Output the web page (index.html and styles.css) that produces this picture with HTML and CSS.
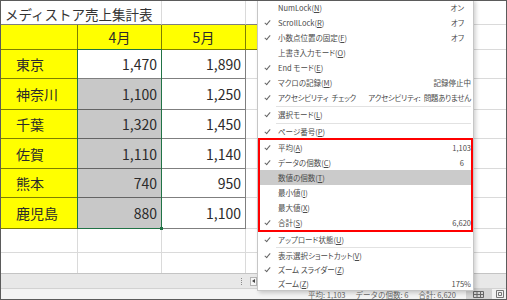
FILE: index.html
```html
<!DOCTYPE html>
<html lang="ja">
<head>
    <meta charset="UTF-8">
    <meta name="viewport" content="width=device-width, initial-scale=1.0">
    <title>メディストア売上集計表</title>
    <link rel="stylesheet" href="styles.css">
</head>
<body>
<div class="window">
    <div class="sheet">
        <!-- row 1 -->
        <div class="c top title">メディストア売上集計表</div>
        <div class="c top"></div>
        <div class="c top"></div>
        <div class="c"></div>
        <div class="c"></div>
        <!-- row 2 -->
        <div class="c t y"></div>
        <div class="c t y center">4月</div>
        <div class="c t y center">5月</div>
        <div class="c t y"></div>
        <div class="c"></div>
        <div class="c"></div>
        <!-- rows 3-8 -->
        <div class="c t y name">東京</div>
        <div class="c t num active">1,470<div class="range"></div></div>
        <div class="c t num">1,890</div>
        <div class="c"></div>
        <div class="c"></div>
        <div class="c"></div>

        <div class="c t y name">神奈川</div>
        <div class="c t num sel">1,100</div>
        <div class="c t num">1,250</div>
        <div class="c"></div>
        <div class="c"></div>
        <div class="c"></div>

        <div class="c t y name">千葉</div>
        <div class="c t num sel">1,320</div>
        <div class="c t num">1,450</div>
        <div class="c"></div>
        <div class="c"></div>
        <div class="c"></div>

        <div class="c t y name">佐賀</div>
        <div class="c t num sel">1,110</div>
        <div class="c t num">1,140</div>
        <div class="c"></div>
        <div class="c"></div>
        <div class="c"></div>

        <div class="c t y name">熊本</div>
        <div class="c t num sel">740</div>
        <div class="c t num">950</div>
        <div class="c"></div>
        <div class="c"></div>
        <div class="c"></div>

        <div class="c t y name">鹿児島</div>
        <div class="c t num sel">880</div>
        <div class="c t num">1,100</div>
        <div class="c"></div>
        <div class="c"></div>
        <div class="c"></div>
        <!-- rows 9-10 -->
        <div class="c"></div><div class="c"></div><div class="c"></div><div class="c"></div><div class="c"></div><div class="c"></div>
        <div class="c"></div><div class="c"></div><div class="c"></div><div class="c"></div><div class="c"></div><div class="c"></div>
    </div>

    <div class="hbar">
        <div class="tabs"></div>
        <div class="split"></div>
        <div class="arrow"></div>
    </div>

    <div class="status">
        <span>平均: 1,103</span>
        <span>データの個数: 6</span>
        <span>合計: 6,620</span>
        <div class="views">
            <div class="view current">
                <svg width="11" height="7" viewBox="0 0 11 7"><path d="M0.5 0.5h10v6h-10z M0.5 3.5h10 M4 0.5v6 M7.5 0.5v6" fill="none" stroke="#666" stroke-width="1"/></svg>
            </div>
            <div class="view">
                <svg width="8" height="8" viewBox="0 0 8 8"><path d="M0.5 0.5h7v7h-7z M2.5 2.5h3v3h-3z" fill="none" stroke="#777" stroke-width="1"/></svg>
            </div>
            <div class="view">
                <svg width="9" height="8" viewBox="0 0 9 8"><path d="M0.5 0.5h8v7h-8z M0.5 4.5h4v3" fill="none" stroke="#777" stroke-width="1"/></svg>
            </div>
        </div>
    </div>

    <div class="menu">
        <div class="item"><span class="chk"></span><span>NumLock(<u>N</u>)</span><span class="val short">オン</span></div>
        <div class="item on"><span class="chk"></span><span>ScrollLock(<u>R</u>)</span><span class="val short">オフ</span></div>
        <div class="item on"><span class="chk"></span><span>小数点位置の固定(<u>F</u>)</span><span class="val short">オフ</span></div>
        <div class="item"><span class="chk"></span><span>上書き入力モード(<u>O</u>)</span></div>
        <div class="item on"><span class="chk"></span><span>End モード(<u>E</u>)</span></div>
        <div class="item on"><span class="chk"></span><span>マクロの記録(<u>M</u>)</span><span class="val">記録停止中</span></div>
        <div class="item on"><span class="chk"></span><span class="tight">アクセシビリティ チェック</span><span class="val tight">アクセシビリティ: 問題ありません</span></div>
        <div class="sep"></div>
        <div class="item on"><span class="chk"></span><span>選択モード(<u>L</u>)</span></div>
        <div class="sep"></div>
        <div class="item on low"><span class="chk"></span><span>ページ番号(<u>P</u>)</span></div>
        <div class="box">
            <div class="item on"><span class="chk"></span><span>平均(<u>A</u>)</span><span class="val">1,103</span></div>
            <div class="item on"><span class="chk"></span><span>データの個数(<u>C</u>)</span><span class="val short">6</span></div>
            <div class="item hover"><span class="chk"></span><span>数値の個数(<u>T</u>)</span></div>
            <div class="item"><span class="chk"></span><span>最小値(<u>I</u>)</span></div>
            <div class="item"><span class="chk"></span><span>最大値(<u>X</u>)</span></div>
            <div class="item on"><span class="chk"></span><span>合計(<u>S</u>)</span><span class="val">6,620</span></div>
        </div>
        <div class="item on low"><span class="chk"></span><span>アップロード状態(<u>U</u>)</span></div>
        <div class="sep"></div>
        <div class="item on low"><span class="chk"></span><span>表示選択ショートカット(<u>V</u>)</span></div>
        <div class="item on low"><span class="chk"></span><span>ズーム スライダー(<u>Z</u>)</span></div>
        <div class="item low"><span class="chk"></span><span>ズーム(<u>Z</u>)</span><span class="val">175%</span></div>
    </div>
</div>
</body>
</html>
```

FILE: styles.css
```css
body {
    margin: 0;
    font-family: "Noto Sans CJK JP", sans-serif;
    background: #fff;
}

.window {
    position: relative;
    width: 507px;
    height: 300px;
    box-sizing: border-box;
    border: 1px solid #5b5b5b;
    overflow: hidden;
    display: flex;
    flex-direction: column;
    background: #fff;
}

/* worksheet grid */
.sheet {
    flex: none;
    height: 272px;
    display: grid;
    grid-template-columns: 77px 84px 84px 84px 84px 200px;
    grid-template-rows: 24px 25px 29px 31px 29px 30px 29px 31px 24px 24px;
    overflow: hidden;
    font-size: 14px;
    color: #2b2b2b;
}

.c {
    box-sizing: border-box;
    border-right: 1px solid #dadada;
    border-bottom: 1px solid #dadada;
    display: flex;
    align-items: center;
    white-space: nowrap;
}

.c.top {
    border-bottom-color: rgba(0, 0, 0, 0.5);
}

.c.t {
    border-color: rgba(0, 0, 0, 0.5); /* table borders */
}

.title {
    grid-column: span 2;
    padding: 2px 0 0 4px;
    font-size: 13.5px;
    color: #333;
}

.y {
    background: #ffff00;
}

.center {
    justify-content: center;
}

.name {
    padding-left: 15px;
}

.num {
    justify-content: flex-end;
    padding-right: 4px;
}

.sel {
    background: #c8c8c8;
}

.active {
    position: relative;
}

.range {
    position: absolute;
    left: -1px;
    top: -1px;
    width: 85px;
    height: 180px;
    box-sizing: border-box;
    border: 1px solid #217346;
}

.range::after {
    content: "";
    position: absolute;
    right: -2px;
    bottom: -2px;
    width: 3px;
    height: 3px;
    background: #217346;
}

/* scroll bar strip and status bar */
.hbar {
    flex: none;
    height: 15px;
    box-sizing: border-box;
    border-top: 1px solid #c4c4c4;
    background: #e8e8e8;
    display: flex;
    align-items: center;
}

.tabs {
    width: 240px;
}

.split {
    width: 0;
    height: 7px;
    border-left: 1px dotted #8a8a8a;
    margin-right: 8px;
}

.arrow {
    width: 7px;
    height: 9px;
    box-sizing: border-box;
    border: 1px solid #b4b4b4;
    background: #f6f6f6;
    position: relative;
}

.arrow::before {
    content: "";
    position: absolute;
    left: 1px;
    top: 1.5px;
    border-style: solid;
    border-width: 2px 3px 2px 0;
    border-color: transparent #444 transparent transparent;
}

.status {
    flex: none;
    height: 11px;
    box-sizing: border-box;
    border-top: 1px solid #d2d2d2;
    background: #f3f3f3;
    display: flex;
    gap: 10px;
    padding: 1px 0 0 307px;
    font-size: 7.5px;
    line-height: 9px;
    color: #666;
    white-space: nowrap;
}

.views {
    margin: -1px 0 0 auto;
    display: flex;
    height: 10px;
}

.view {
    width: 16px;
    display: flex;
    align-items: center;
    justify-content: center;
}

.view.current {
    width: 26px;
    background: #d4d4d4;
}

.view:last-child {
    width: 18px;
}

/* status bar context menu */
.menu {
    position: absolute;
    left: 256px;
    top: -2px;
    width: 217px;
    box-sizing: border-box;
    background: #fff;
    border: 1px solid #c6c6c6;
    box-shadow: 2px 2px 4px rgba(0, 0, 0, 0.18);
    font-size: 7.5px;
    color: #4a4a4a;
    font-feature-settings: "palt";
}

.item {
    height: 15px;
    display: grid;
    grid-template-columns: 20px 1fr auto;
    align-items: center;
    padding-right: 2px;
    white-space: nowrap;
}

.item.low {
    height: 14px;
}

.item u {
    text-underline-offset: 1px;
}

.tight {
    letter-spacing: -0.3px;
    word-spacing: 2px;
}

.chk {
    height: 100%;
    position: relative;
}

.on .chk::before {
    content: "";
    position: absolute;
    left: 8px;
    top: 4px;
    width: 2px;
    height: 5px;
    border: solid #666;
    border-width: 0 1px 1px 0;
    transform: rotate(40deg);
}

.val {
    text-align: right;
}

.val.short {
    margin-right: 7px;
}

.sep {
    margin: 1px 2px 0 18px;
    border-top: 1px solid #e2e2e2;
}

.box {
    border: 2px solid #ff0000;
}

.box .item {
    grid-template-columns: 18px 1fr auto;
    padding-right: 0;
}

.box .chk::before {
    left: 6px;
}

.item.hover {
    background: #cbcbcb;
}
```
